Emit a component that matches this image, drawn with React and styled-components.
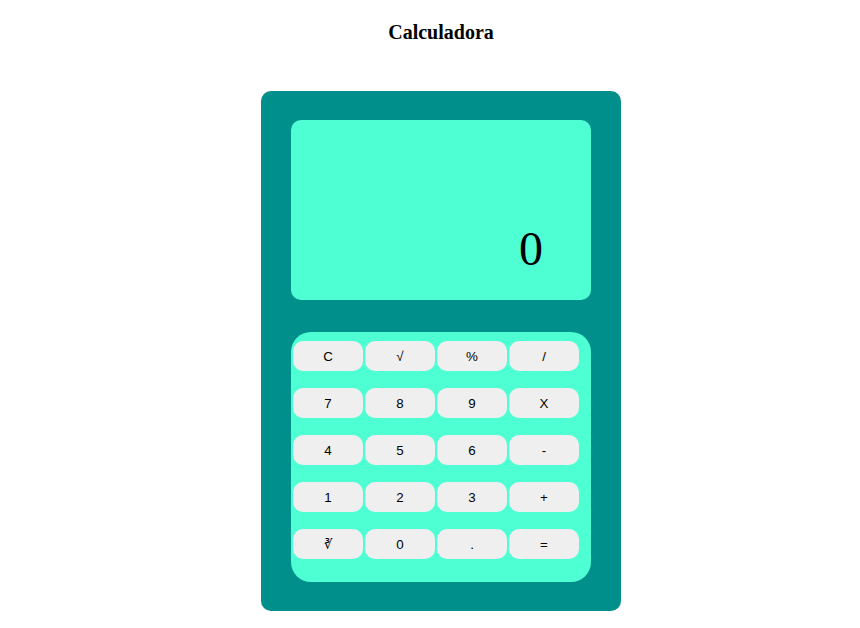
import React from "react";
import styled, { createGlobalStyle } from "styled-components";

const Global = createGlobalStyle`
  html, body { margin: 0; padding: 0; background: #ffffff; }
  body { font-family: "Liberation Serif", "Times New Roman", serif; }
`;

const Page = styled.div`
  display: flex;
  flex-direction: column;
  align-items: center;
  padding: 21px 0 17px 22px;
`;

const Title = styled.h3`
  margin: 0;
  font-size: 20px;
  line-height: 22px;
  font-weight: bold;
  color: #000;
`;

const Calculator = styled.div`
  margin-top: 48px;
  width: 360px;
  height: 520px;
  box-sizing: border-box;
  padding: 29px 30px;
  background: #008f8a;
  border-radius: 10px;
  display: flex;
  flex-direction: column;
  gap: 32px;
`;

const Display = styled.div`
  height: 180px;
  box-sizing: border-box;
  background: #4fffd4;
  border-radius: 10px;
  display: flex;
  align-items: flex-end;
  justify-content: flex-end;
  padding: 0 48px 27px 0;
`;

const Value = styled.span`
  font-family: "Liberation Serif", "Times New Roman", serif;
  font-size: 48px;
  line-height: 48px;
  color: #000;
`;

const Keypad = styled.div`
  height: 250px;
  box-sizing: border-box;
  background: #4fffd4;
  border-radius: 20px;
  padding: 9px 0 0 2px;
  display: grid;
  grid-template-columns: repeat(4, 70px);
  grid-auto-rows: 30px;
  column-gap: 2px;
  row-gap: 17px;
  align-content: start;
`;

const Key = styled.button`
  width: 70px;
  height: 30px;
  border: none;
  border-radius: 10px;
  background: #efefef;
  color: #000;
  font-family: "Liberation Sans", Arial, sans-serif;
  font-size: 13.333px;
  padding: 0;
  cursor: pointer;
  display: flex;
  align-items: center;
  justify-content: center;
`;

const keys = [
  "C", "√", "%", "/",
  "7", "8", "9", "X",
  "4", "5", "6", "-",
  "1", "2", "3", "+",
  "∛", "0", ".", "=",
];

export default function App() {
  return (
    <>
      <Global />
      <Page>
        <Title>Calculadora</Title>
        <Calculator>
          <Display>
            <Value>0</Value>
          </Display>
          <Keypad>
            {keys.map((k) => (
              <Key key={k}>{k}</Key>
            ))}
          </Keypad>
        </Calculator>
      </Page>
    </>
  );
}
